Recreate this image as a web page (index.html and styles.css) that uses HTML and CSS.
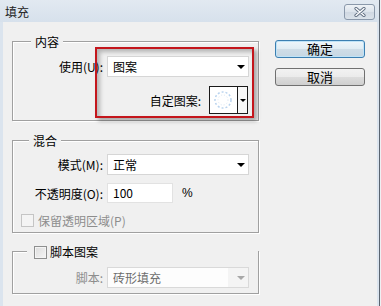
FILE: index.html
```html
<!DOCTYPE html>
<html lang="zh-CN">
<head>
    <meta charset="UTF-8">
    <title>填充</title>
    <link rel="stylesheet" href="styles.css">
</head>
<body>

<div class="window">
    <div class="titlebar">
        <span class="title">填充</span>
        <button class="close">
            <svg width="12" height="10" viewBox="0 0 12 10">
                <path d="M2 1.5 L10 8.5 M10 1.5 L2 8.5" stroke="#5f6d80" stroke-width="3.2" stroke-linecap="round"/>
                <path d="M2 1.5 L10 8.5 M10 1.5 L2 8.5" stroke="#fff" stroke-width="1.4" stroke-linecap="round"/>
            </svg>
        </button>
    </div>

    <div class="content">
        <div class="main">
            <div class="group group-content">
                <div class="legend">内容</div>
                <div class="row row-use">
                    <label class="label">使用(U):</label>
                    <div class="select"><span>图案</span><i class="arrow"></i></div>
                </div>
                <div class="row row-pattern">
                    <label class="label-inline">自定图案:</label>
                    <div class="swatch">
                        <div class="swatch-preview">
                            <svg width="27" height="26" viewBox="0 0 27 26">
                                <circle cx="13" cy="13" r="8" fill="none" stroke="#b9d3ee" stroke-width="1.5" stroke-dasharray="2 2"/>
                                <circle cx="13" cy="13" r="5" fill="none" stroke="#d8e6f5" stroke-width="1" stroke-dasharray="1 2"/>
                            </svg>
                        </div>
                        <div class="swatch-btn"><i class="arrow"></i></div>
                    </div>
                </div>
            </div>

            <div class="group group-blend">
                <div class="legend">混合</div>
                <div class="row row-mode">
                    <label class="label">模式(M):</label>
                    <div class="select"><span>正常</span><i class="arrow"></i></div>
                </div>
                <div class="row row-opacity">
                    <label class="label">不透明度(O):</label>
                    <div class="input">100</div>
                    <span class="unit">%</span>
                </div>
                <div class="row row-check">
                    <span class="checkbox disabled"></span>
                    <span class="check-text disabled">保留透明区域(P)</span>
                </div>
            </div>

            <div class="group group-script">
                <div class="legend legend-check">
                    <span class="checkbox"></span>
                    <span class="check-text">脚本图案</span>
                </div>
                <div class="row row-script">
                    <label class="label disabled">脚本:</label>
                    <div class="select disabled"><span>砖形填充</span><i class="arrow"></i></div>
                </div>
            </div>
        </div>

        <div class="side">
            <button class="btn btn-default">确定</button>
            <button class="btn">取消</button>
        </div>
    </div>

    <div class="highlight"></div>
</div>

</body>
</html>
```

FILE: styles.css
```css
body {
    margin: 0;
    background-color: #eef0f3;
    font-family: "Noto Sans CJK SC", "Noto Sans", sans-serif;
    font-size: 12px;
    color: #000;
}
.window {
    position: relative;
    box-sizing: border-box;
    width: 379px;
    height: 306px;
    background-color: #f0f0f0;
    border-left: 3px solid #dbe4ee;
    border-right: 2px solid #dbe4ee;
    box-shadow: 1px 0 0 #5a6470;
}
.titlebar {
    height: 22px;
    margin-left: -3px;
    margin-right: -2px;
    background: linear-gradient(#e2e9f1, #d7e1ec);
    display: flex;
    justify-content: space-between;
    align-items: flex-start;
}
.title {
    padding-left: 5px;
    line-height: 23px;
    font-size: 12px;
    color: #222;
}
.close {
    width: 31px;
    height: 16px;
    margin: 4px 4px 0 0;
    padding: 0;
    border: 1px solid #8a98aa;
    border-radius: 3px;
    background: linear-gradient(#eef2f6, #dce3eb 50%, #cfd8e2 50%, #dbe2ea);
    display: flex;
    justify-content: center;
    align-items: center;
}
.content {
    display: flex;
    padding-left: 9px;
}
.main {
    width: 247px;
}
.group {
    box-sizing: border-box;
    border: 1px solid #a0a0a0;
    box-shadow: inset 1px 1px 0 #fff, 1px 1px 0 #fff;
}
.group-content {
    margin-top: 19px;
    height: 80px;
}
.group-blend {
    margin-top: 19px;
    height: 93px;
}
.group-script {
    margin-top: 18px;
    height: 43px;
}
.legend {
    display: table;
    margin: -7px 0 0 18px;
    padding: 0 4px;
    height: 14px;
    line-height: 14px;
    background-color: #f0f0f0;
}
.group-blend .legend {
    margin-left: 16px;
}
.legend-check {
    display: flex;
    align-items: center;
    margin-left: 14px;
    padding: 0 20px 0 7px;
}
.legend-check .check-text {
    margin-left: 3px;
    color: #000;
}
.row {
    display: flex;
    align-items: center;
}
.label {
    width: 90px;
    margin-right: 4px;
    text-align: right;
    white-space: nowrap;
}
.row-use {
    margin-top: 7px;
}
.row-pattern {
    margin-top: 9px;
    justify-content: flex-end;
    padding-right: 10px;
}
.label-inline {
    margin-right: 8px;
}
.row-mode {
    margin-top: 6px;
}
.row-opacity {
    margin-top: 8px;
}
.row-check {
    margin-top: 9px;
    padding-left: 8px;
}
.row-script {
    margin-top: 8px;
}
.select {
    box-sizing: border-box;
    width: 142px;
    height: 21px;
    padding-left: 5px;
    background-color: #fff;
    border: 1px solid #d6d6d6;
    display: flex;
    align-items: center;
    justify-content: space-between;
}
.select .arrow {
    margin-right: 3px;
}
.arrow {
    display: block;
    width: 0;
    height: 0;
    border-left: 4px solid transparent;
    border-right: 4px solid transparent;
    border-top: 4px solid #000;
}
.select.disabled {
    border-color: #d9d9d9;
    color: #6d6d6d;
    background: linear-gradient(90deg, #fdfdfd 0, #fdfdfd 120px, #f4f4f4 120px);
}
.select.disabled .arrow {
    border-top-color: #a8a8a8;
}
.input {
    box-sizing: border-box;
    width: 66px;
    height: 20px;
    padding-left: 5px;
    line-height: 18px;
    background-color: #fff;
    border: 1px solid #e2e2e2;
}
.unit {
    margin-left: 9px;
    font-family: "Liberation Sans", Arial, sans-serif;
    font-size: 12px;
}
.swatch {
    box-sizing: border-box;
    width: 39px;
    height: 28px;
    border: 1px solid #1a1a1a;
    background-color: #fff;
    display: flex;
}
.swatch-preview {
    width: 27px;
    border-right: 1px solid #1a1a1a;
}
.swatch-btn {
    flex: 1;
    display: flex;
    align-items: center;
    justify-content: center;
    background-color: #f7f7f7;
}
.swatch-btn .arrow {
    border-left-width: 3px;
    border-right-width: 3px;
    border-top-width: 3px;
}
.checkbox {
    box-sizing: border-box;
    width: 13px;
    height: 13px;
    border: 1px solid #8e8f8f;
    background: linear-gradient(135deg, #dcdcdc, #f6f6f6);
    box-shadow: inset 0 0 0 1px #f4f4f4;
}
.checkbox.disabled {
    border-color: #c5c5c5;
    background: #f4f4f4;
}
.check-text {
    margin-left: 4px;
}
.disabled {
    color: #8d8d8d;
}
.side {
    margin-left: 16px;
    padding-top: 18px;
    display: flex;
    flex-direction: column;
    gap: 10px;
}
.btn {
    width: 90px;
    height: 18px;
    padding: 0;
    border: 1px solid #707070;
    border-radius: 3px;
    background: linear-gradient(#f2f2f2, #ebebeb 50%, #dddddd 50%, #cfcfcf);
    font-family: "Noto Sans CJK SC", sans-serif;
    font-size: 13px;
    line-height: 16px;
    color: #000;
}
.btn-default {
    border-color: #3c7fb1;
    background: linear-gradient(#eef6fb, #e0ecf3 50%, #cfdde7 50%, #c6d7e3);
    box-shadow: inset 0 0 0 1px #bfe3f7;
}
.highlight {
    position: absolute;
    left: 92px;
    top: 47px;
    width: 155px;
    height: 67px;
    border: 2px solid #c4161c;
    box-shadow: 3px 3px 4px rgba(0, 0, 0, 0.3), inset 3px 3px 4px rgba(0, 0, 0, 0.25);
}
```
